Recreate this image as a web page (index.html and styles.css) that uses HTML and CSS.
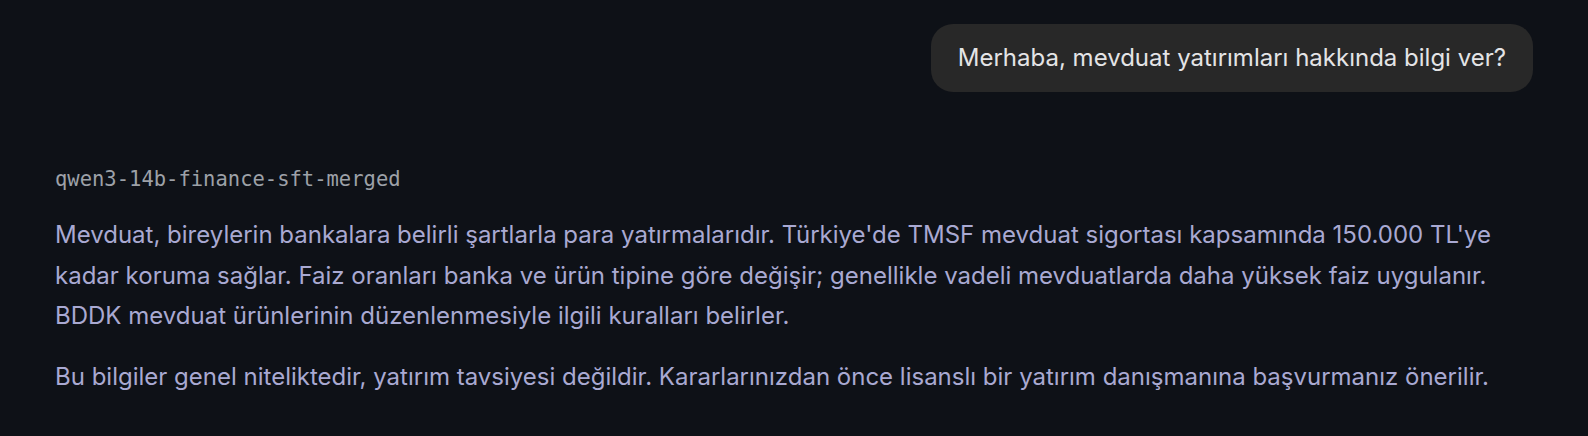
FILE: index.html
```html
<!DOCTYPE html>
<html lang="tr">
<head>
<meta charset="utf-8">
<title>Chat</title>
<link rel="stylesheet" href="styles.css">
</head>
<body>
<main class="chat">
  <div class="user-row">
    <div class="bubble">Merhaba, mevduat yatırımları hakkında bilgi ver?</div>
  </div>
  <section class="assistant">
    <div class="model">qwen3-14b-finance-sft-merged</div>
    <p class="msg">Mevduat, bireylerin bankalara belirli şartlarla para yatırmalarıdır. Türkiye'de TMSF mevduat sigortası kapsamında 150.000 TL'ye kadar koruma sağlar. Faiz oranları banka ve ürün tipine göre değişir; genellikle vadeli mevduatlarda daha yüksek faiz uygulanır. BDDK mevduat ürünlerinin düzenlenmesiyle ilgili kuralları belirler.</p>
    <p class="msg">Bu bilgiler genel niteliktedir, yatırım tavsiyesi değildir. Kararlarınızdan önce lisanslı bir yatırım danışmanına başvurmanız önerilir.</p>
  </section>
</main>
</body>
</html>
```

FILE: styles.css
```css
html, body {
  margin: 0;
  padding: 0;
  background: #0e1117;
  height: 100%;
}
body {
  font-family: Inter, "Noto Sans", "Liberation Sans", sans-serif;
  -webkit-font-smoothing: antialiased;
}
.chat {
  padding: 24px 55px 0 55px;
  display: flex;
  flex-direction: column;
}
.user-row {
  display: flex;
  justify-content: flex-end;
}
.bubble {
  background: #282828;
  color: #e4e4e6;
  font-size: 24px;
  line-height: 68px;
  height: 68px;
  padding: 0 27px;
  border-radius: 22px;
  white-space: nowrap;
}
.assistant {
  margin-top: 72px;
}
.model {
  font-family: "DejaVu Sans Mono", "Liberation Mono", monospace;
  color: #9da1a8;
  font-size: 20.5px;
  line-height: 30px;
  height: 30px;
}
.msg {
  margin: 21px 0 0 0;
  color: #a9a9d2;
  font-size: 24px;
  line-height: 40.5px;
}
.msg + .msg {
  margin-top: 20px;
}
```
